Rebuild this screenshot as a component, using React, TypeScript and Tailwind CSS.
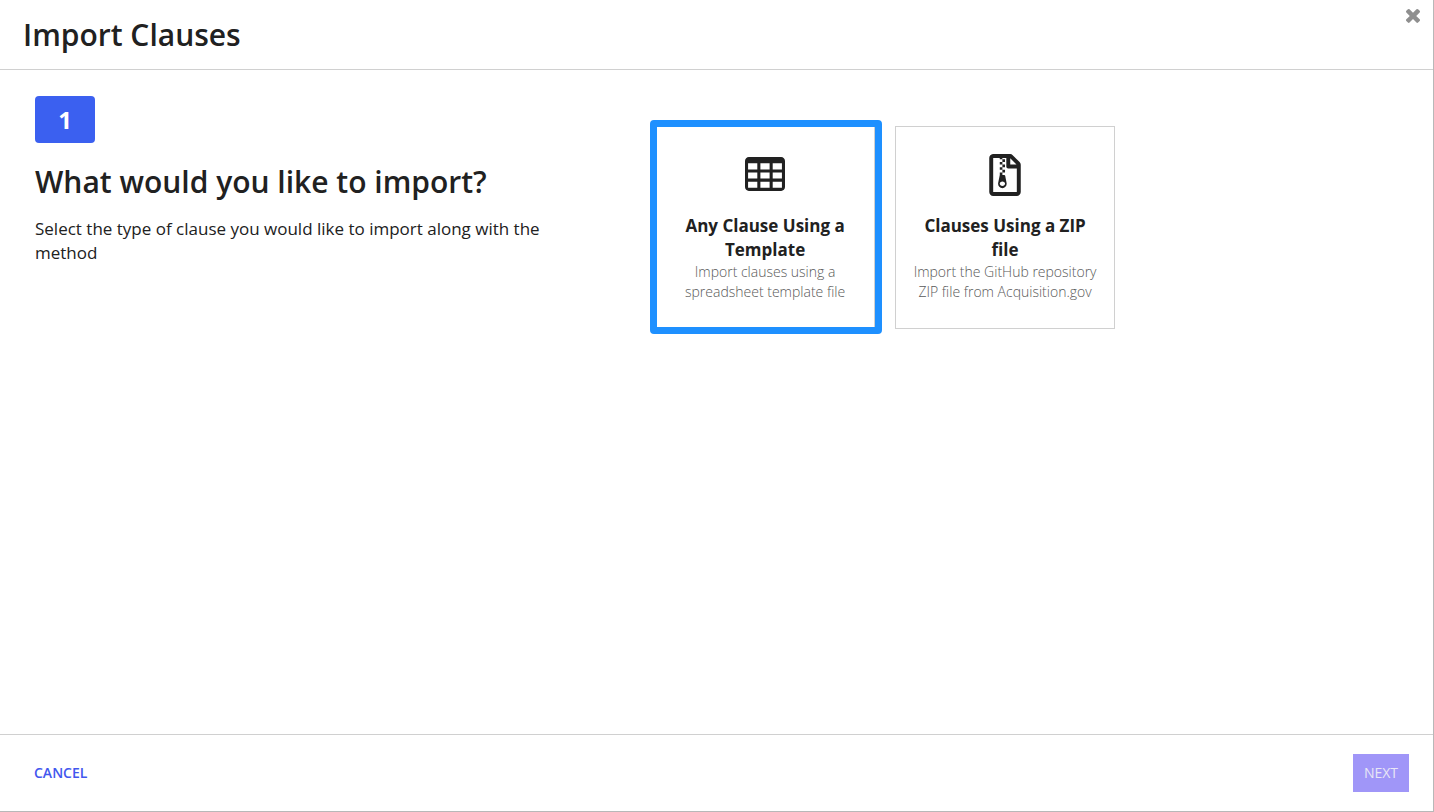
import { useState } from 'react';
import type { ReactNode } from 'react';
import { FaRegFileArchive } from 'react-icons/fa';

type ImportMethod = 'template' | 'zip';

const CloseIcon = () => (
    <svg viewBox="302 302 1188 1252" className="w-3.5 h-[15px]" fill="currentColor" aria-hidden="true">
        <path d="M1490 1322q0 40-28 68l-136 136q-28 28-68 28t-68-28l-294-294-294 294q-28 28-68 28t-68-28l-136-136q-28-28-28-68t28-68l294-294-294-294q-28-28-28-68t28-68l136-136q28-28 68-28t68 28l294 294 294-294q28-28 68-28t68 28l136 136q28 28 28 68t-28 68l-294 294 294 294q28 28 28 68z" />
    </svg>
);

const TableIcon = () => (
    <svg viewBox="0 0 1664 1408" className="mb-0.5 w-10 h-[34px]" fill="currentColor" fillRule="evenodd" aria-hidden="true">
        <path d="M160 0h1344q66 0 113 47t47 113v1088q0 66-47 113t-113 47h-1344q-66 0-113-47t-47-113v-1088q0-66 47-113t113-47z M128 256h384v256h-384z M640 256h384v256h-384z M1152 256h384v256h-384z M128 640h384v256h-384z M640 640h384v256h-384z M1152 640h384v256h-384z M128 1024h384v256h-384z M640 1024h384v256h-384z M1152 1024h384v256h-384z" />
    </svg>
);

interface MethodCardProps {
    icon: ReactNode;
    title: string;
    description: string;
    selected: boolean;
    onSelect: () => void;
}

const MethodCard = ({ icon, title, description, selected, onSelect }: MethodCardProps) => (
    <button
        type="button"
        aria-pressed={selected}
        onClick={onSelect}
        className="relative w-[220px] flex flex-col items-center border border-[#d0d0d0] bg-white px-4 pt-6 pb-[26px] text-center cursor-pointer"
    >
        <span className="flex h-12 items-center justify-center">{icon}</span>
        <span className="mt-[15px] text-[17px] leading-6 font-bold text-[#212121]">{title}</span>
        <span className="text-sm leading-5 font-light text-[#595959]">{description}</span>
        {selected && (
            <span className="absolute -top-[7px] -bottom-1.5 -left-1.5 -right-2 rounded-sm border-[7px] border-[#1e90ff] pointer-events-none" />
        )}
    </button>
);

const ImportClauses = () => {
    const [method, setMethod] = useState<ImportMethod>('template');

    return (
        <div className="flex min-h-screen flex-col border-r border-b border-[#b8b8b8] bg-white font-['Open_Sans',sans-serif] text-[#212121]">
            {/* HEADER */}
            <header className="flex items-start justify-between border-b border-[#d0d0d0] pl-[23px] pr-[13px]">
                <h1 className="py-[15px] text-[30px] leading-[39px] font-semibold">Import Clauses</h1>
                <button type="button" aria-label="Close" className="mt-2 text-[#8f8f8f] cursor-pointer">
                    <CloseIcon />
                </button>
            </header>

            {/* CONTENT */}
            <main className="flex flex-1 items-start">
                <section className="w-5/12 pl-[35px] pt-[26px]">
                    <div className="flex h-[47px] w-[60px] items-center justify-center rounded-sm bg-[#3b60f0] text-2xl font-bold text-white">
                        1
                    </div>
                    <h2 className="mt-[19px] text-[30px] leading-[39px] font-semibold">What would you like to import?</h2>
                    <p className="mt-4 text-[17px] leading-6">
                        Select the type of clause you would like to import along with the method
                    </p>
                </section>

                <section className="flex flex-1 flex-wrap gap-5 pl-[58px] pt-14">
                    <MethodCard
                        icon={<TableIcon />}
                        title="Any Clause Using a Template"
                        description="Import clauses using a spreadsheet template file"
                        selected={method === 'template'}
                        onSelect={() => setMethod('template')}
                    />
                    <MethodCard
                        icon={<FaRegFileArchive size={42} />}
                        title="Clauses Using a ZIP file"
                        description="Import the GitHub repository ZIP file from Acquisition.gov"
                        selected={method === 'zip'}
                        onSelect={() => setMethod('zip')}
                    />
                </section>
            </main>

            {/* FOOTER */}
            <footer className="flex items-center justify-between border-t border-[#d0d0d0] py-[19px] pl-[34px] pr-6">
                <button type="button" className="text-sm font-semibold text-[#4257ee] cursor-pointer">
                    CANCEL
                </button>
                <button type="button" disabled className="h-[38px] bg-[#a096f8] px-[11px] text-sm font-medium text-[#e9e6f5]">
                    NEXT
                </button>
            </footer>
        </div>
    );
};

export default ImportClauses;
